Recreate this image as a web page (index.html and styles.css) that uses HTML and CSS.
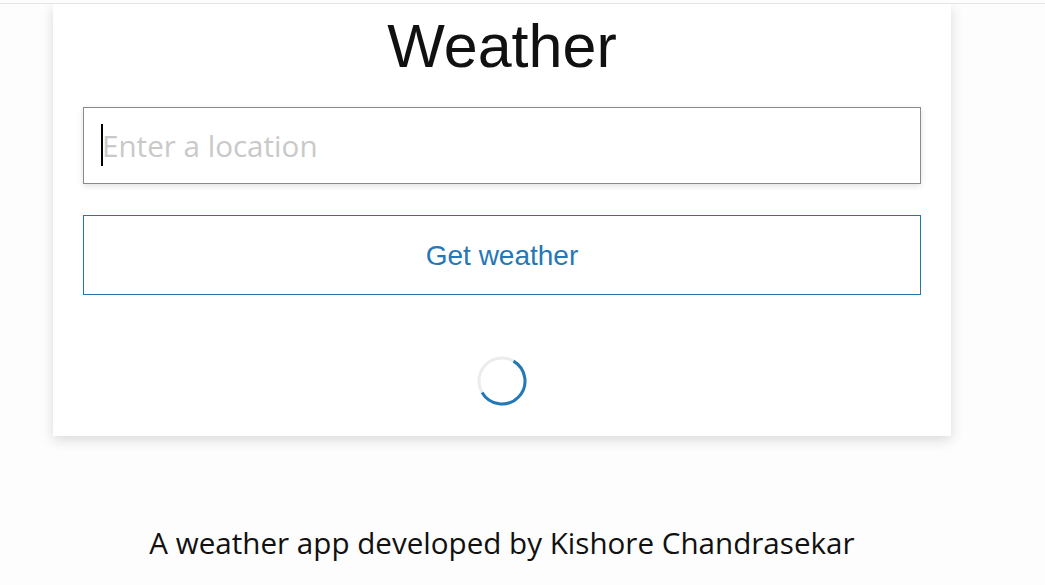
FILE: index.html
```html
<!DOCTYPE html>
<html lang="en">
<head>
<meta charset="utf-8">
<title>Weather</title>
<link rel="stylesheet" href="styles.css">
</head>
<body>
<div class="page">
  <main class="card">
    <h1 class="title">Weather</h1>
    <div class="field">
      <input class="location" type="text" placeholder="Enter a location">
      <span class="caret"></span>
    </div>
    <button class="get-btn" type="button">Get weather</button>
    <div class="spinner-wrap">
      <svg class="spinner" width="50" height="50" viewBox="0 0 50 50">
        <circle cx="25" cy="25" r="23" fill="none" stroke="#ececec" stroke-width="3"/>
        <path d="M36.5 5.08 A23 23 0 1 1 5.08 36.5" fill="none" stroke="#2379b8" stroke-width="3"/>
      </svg>
    </div>
  </main>
  <footer class="footer">A weather app developed by Kishore Chandrasekar</footer>
</div>
</body>
</html>
```
FILE: styles.css
```css
html {
  margin: 0;
  padding: 3px 0 0;
  background: #fdfdfd;
}
body {
  margin: 0;
  padding: 0;
  border-top: 1px solid #e4e4e4;
  background: #fdfdfd;
}
.page {
  width: 1004px;
  display: flex;
  flex-direction: column;
}
.card {
  margin: 0 53px;
  background: #ffffff;
  box-shadow: 0 4px 12px rgba(0, 0, 0, 0.14);
  padding: 7px 30px 30px;
  display: flex;
  flex-direction: column;
}
.title {
  margin: 0;
  font-family: "Liberation Sans", Arial, sans-serif;
  font-weight: normal;
  font-size: 61px;
  color: #111;
  text-align: center;
  line-height: 71px;
}
.field {
  position: relative;
  margin-top: 25px;
}
.location {
  box-sizing: border-box;
  width: 100%;
  height: 77px;
  border: 1px solid #8a8a8a;
  box-shadow: 0 2px 6px rgba(0, 0, 0, 0.12);
  padding: 0 18px;
  font-family: "Open Sans", "Noto Sans", sans-serif;
  font-size: 29.6px;
  color: #222;
  outline: none;
  background: #fff;
  border-radius: 0;
}
.location::placeholder {
  color: #c9c9c9;
}
.caret {
  position: absolute;
  left: 18px;
  top: 17px;
  width: 2px;
  height: 42px;
  background: #000;
}
.get-btn {
  margin-top: 31px;
  height: 80px;
  border: 1px solid #2474a8;
  background: #fff;
  color: #2677b5;
  font-family: "Liberation Sans", Arial, sans-serif;
  font-size: 28px;
  border-radius: 0;
  padding: 2px 0 0;
}
.spinner-wrap {
  margin-top: 61px;
  display: flex;
  justify-content: center;
}
.spinner {
  display: block;
}
.footer {
  margin-top: 86px;
  text-align: center;
  font-family: "Open Sans", "Noto Sans", sans-serif;
  font-size: 29.6px;
  color: #111;
}
```
